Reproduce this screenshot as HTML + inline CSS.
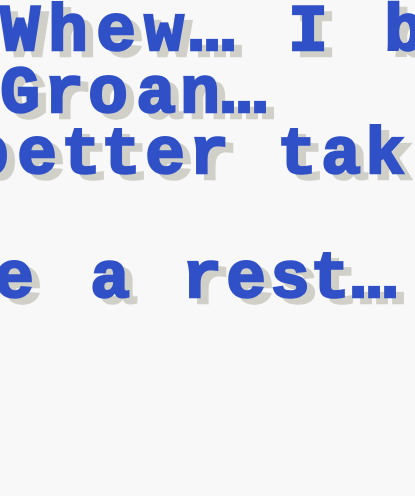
<!DOCTYPE html>
<html><head><meta charset="utf-8"><style>
html,body{margin:0;padding:0;background:#f8f8f8;width:415px;height:496px;overflow:hidden}
svg{display:block}
text{font-family:"Liberation Mono","DejaVu Sans Mono",monospace;font-weight:bold;font-size:66px;text-anchor:middle;stroke-width:2.5px;stroke-linejoin:miter}
.s{fill:#d0d0c8;stroke:#d0d0c8}.b{fill:#3050c8;stroke:#3050c8}
</style></head><body>
<svg width="415" height="496" xmlns="http://www.w3.org/2000/svg">
<g class="s" transform="translate(8,6)">
<text x="20" y="50">W</text><text x="68" y="50">h</text><text x="116" y="50">e</text><text x="164" y="50">w</text><text x="196" y="50">.</text><text x="212" y="50">.</text><text x="228" y="50">.</text><text x="308" y="50">I</text><text x="404" y="50">b</text>
<text x="20" y="112">G</text><text x="64" y="112">r</text><text x="108" y="112">o</text><text x="156" y="112">a</text><text x="200" y="112">n</text><text x="228" y="112">.</text><text x="244" y="112">.</text><text x="260" y="112">.</text>
<text x="-11" y="173">b</text><text x="37" y="173">e</text><text x="81" y="173">t</text><text x="121" y="173">t</text><text x="165" y="173">e</text><text x="209" y="173">r</text><text x="297" y="173">t</text><text x="341" y="173">a</text><text x="385" y="173">k</text>
<text x="14" y="297">e</text><text x="110" y="297">a</text><text x="202" y="297">r</text><text x="246" y="297">e</text><text x="290" y="297">s</text><text x="330" y="297">t</text><text x="358" y="297">.</text><text x="374" y="297">.</text><text x="390" y="297">.</text>
</g>
<g class="b">
<text x="20" y="50">W</text><text x="68" y="50">h</text><text x="116" y="50">e</text><text x="164" y="50">w</text><text x="196" y="50">.</text><text x="212" y="50">.</text><text x="228" y="50">.</text><text x="308" y="50">I</text><text x="404" y="50">b</text>
<text x="20" y="112">G</text><text x="64" y="112">r</text><text x="108" y="112">o</text><text x="156" y="112">a</text><text x="200" y="112">n</text><text x="228" y="112">.</text><text x="244" y="112">.</text><text x="260" y="112">.</text>
<text x="-11" y="173">b</text><text x="37" y="173">e</text><text x="81" y="173">t</text><text x="121" y="173">t</text><text x="165" y="173">e</text><text x="209" y="173">r</text><text x="297" y="173">t</text><text x="341" y="173">a</text><text x="385" y="173">k</text>
<text x="14" y="297">e</text><text x="110" y="297">a</text><text x="202" y="297">r</text><text x="246" y="297">e</text><text x="290" y="297">s</text><text x="330" y="297">t</text><text x="358" y="297">.</text><text x="374" y="297">.</text><text x="390" y="297">.</text>
</g>
</svg>
</body></html>
